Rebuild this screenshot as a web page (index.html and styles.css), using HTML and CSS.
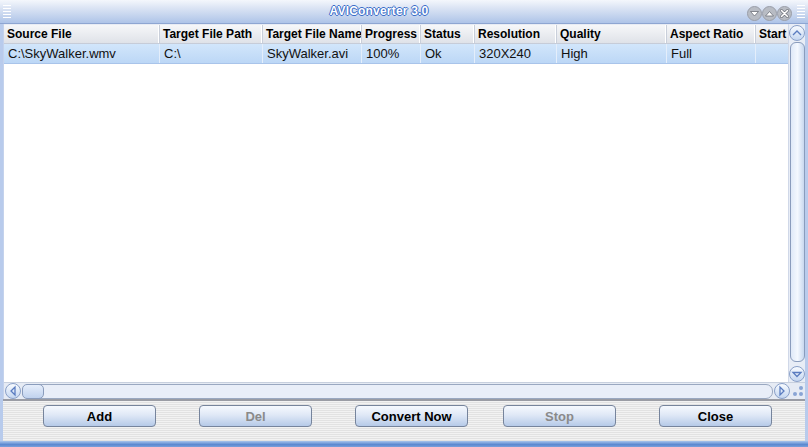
FILE: index.html
```html
<!DOCTYPE html>
<html>
<head>
<meta charset="utf-8">
<title>AVIConverter 3.0</title>
<link rel="stylesheet" href="styles.css">
</head>
<body>
<div class="win">
  <div class="titlebar">
    <div class="grip"><i></i><i></i><i></i><i></i><i></i></div>
    <div class="title">AVIConverter 3.0</div>
    <div class="tbtns">
      <span class="tb"><svg width="15" height="15" viewBox="0 0 15 15"><circle cx="7.5" cy="7.5" r="7" fill="#b8bcc4" stroke="#9a9ea8"/><path d="M3.5 5.5h8l-4 4.5z" fill="#fff" stroke="#6c7078" stroke-width="0.8"/></svg></span>
      <span class="tb"><svg width="15" height="15" viewBox="0 0 15 15"><circle cx="7.5" cy="7.5" r="7" fill="#b8bcc4" stroke="#9a9ea8"/><path d="M3.5 10h8l-4-4.5z" fill="#fff" stroke="#6c7078" stroke-width="0.8"/></svg></span>
      <span class="tb"><svg width="15" height="15" viewBox="0 0 15 15"><circle cx="7.5" cy="7.5" r="7" fill="#b8bcc4" stroke="#9a9ea8"/><path d="M4.5 4.5l6 6M10.5 4.5l-6 6" stroke="#6c7078" stroke-width="3" stroke-linecap="round"/><path d="M4.5 4.5l6 6M10.5 4.5l-6 6" stroke="#fff" stroke-width="1.6" stroke-linecap="round"/></svg></span>
    </div>
    <div class="grip grip-r"><i></i><i></i><i></i><i></i><i></i></div>
  </div>
  <div class="content">
    <div class="tablewrap">
      <div class="table">
        <div class="row head">
          <div class="c c1">Source File</div>
          <div class="c c2">Target File Path</div>
          <div class="c c3">Target File Name</div>
          <div class="c c4">Progress</div>
          <div class="c c5">Status</div>
          <div class="c c6">Resolution</div>
          <div class="c c7">Quality</div>
          <div class="c c8">Aspect Ratio</div>
          <div class="c c9">Start</div>
        </div>
        <div class="row sel">
          <div class="c c1">C:\SkyWalker.wmv</div>
          <div class="c c2">C:\</div>
          <div class="c c3">SkyWalker.avi</div>
          <div class="c c4">100%</div>
          <div class="c c5">Ok</div>
          <div class="c c6">320X240</div>
          <div class="c c7">High</div>
          <div class="c c8">Full</div>
          <div class="c c9"></div>
        </div>
      </div>
      <div class="vscroll">
        <span class="sbtn"><svg width="16" height="16" viewBox="0 0 16 16"><path d="M4 10l4-4 4 4" fill="none" stroke="#5a7cc0" stroke-width="1.3"/></svg></span>
        <span class="vthumb"></span>
        <span class="sbtn"><svg width="16" height="16" viewBox="0 0 16 16"><path d="M4 6.5h8l-4 4z" fill="none" stroke="#5a7cc0" stroke-width="1.3"/></svg></span>
      </div>
    </div>
    <div class="hscroll">
      <span class="sbtn"><svg width="16" height="16" viewBox="0 0 16 16"><path d="M10 4v8l-4-4z" fill="none" stroke="#5a7cc0" stroke-width="1.3"/></svg></span>
      <span class="htrack"><span class="hthumb"></span></span>
      <span class="sbtn"><svg width="16" height="16" viewBox="0 0 16 16"><path d="M6 4v8l4-4z" fill="none" stroke="#5a7cc0" stroke-width="1.3"/></svg></span>
      <span class="corner"><svg width="14" height="14" viewBox="0 0 14 14"><circle cx="10" cy="4" r="2" fill="#8aa4d4"/><circle cx="4" cy="10" r="2" fill="#8aa4d4"/><circle cx="10" cy="10" r="2" fill="#8aa4d4"/></svg></span>
    </div>
    <div class="buttons">
      <button class="btn">Add</button>
      <button class="btn dis">Del</button>
      <button class="btn">Convert Now</button>
      <button class="btn dis">Stop</button>
      <button class="btn">Close</button>
    </div>
  </div>
  <div class="bottomedge"></div>
</div>
</body>
</html>
```
FILE: styles.css
```css
* { box-sizing: border-box; }
html, body { margin: 0; padding: 0; }
body { width: 808px; height: 447px; overflow: hidden; background: #fff; font-family: "Liberation Sans", Arial, sans-serif; }
.win { width: 808px; height: 447px; display: flex; flex-direction: column; background: #c4d2ec; border-left: 3px solid #b8cbec; border-right: 3px solid #b8cbec; }
.titlebar { height: 24px; display: flex; align-items: center; background: linear-gradient(#f4f7fc 0%, #dbe4f4 35%, #aec4e8 100%); border-bottom: 1px solid #8ea6d2; margin-left: -3px; margin-right: -3px; padding-left: 3px; padding-right: 3px; }
.grip { width: 8px; display: flex; flex-direction: column; gap: 2px; }
.grip i { display: block; height: 1px; background: #8ea4cc; border-bottom: 1px solid #fff; }
.title { flex: 1; text-align: center; font-weight: bold; font-size: 12px; color: #fff; text-shadow: 1px 0 #3a6cc8, -1px 0 #3a6cc8, 0 1px #3a6cc8, 0 -1px #3a6cc8; letter-spacing: 0.2px; margin-top: -1px; }
.tbtns { display: flex; margin-right: 5px; margin-top: 3px; }
.tb { width: 15px; height: 15px; display: block; }
.tb svg { display: block; }
.content { flex: 1; display: flex; flex-direction: column; background: #fff; margin-left: 1px; }
.tablewrap { flex: 1; display: flex; min-height: 0; }
.table { flex: 1; overflow: hidden; background: #fff; }
.row { display: flex; height: 20px; }
.c { flex: none; white-space: nowrap; overflow: hidden; padding-left: 4px; display: flex; align-items: center; border-right: 1px solid #fff; }
.head { background: linear-gradient(#f6f7f9, #dfe2e8); border-bottom: 1px solid #c6ccd8; border-top: 1px solid #e8ecf4; }
.head .c { font-weight: bold; font-size: 12px; color: #000; padding-left: 3px; border-right: 1px solid #c9cfda; box-shadow: inset -1px 0 #fff; }
.sel { background: linear-gradient(#d2e6fb, #bcd7f6); border-bottom: 1px solid #a9c4ea; }
.sel .c { font-size: 13px; color: #111; border-right: 1px solid #e4eefb; }
.c1 { width: 156px; }
.c2 { width: 103px; }
.c3 { width: 99px; }
.c4 { width: 59px; }
.c5 { width: 54px; }
.c6 { width: 82px; }
.c7 { width: 110px; }
.c8 { width: 89px; }
.c9 { width: 40px; }
.vscroll { width: 17px; display: flex; flex-direction: column; align-items: center; background: #e8edf6; border-left: 1px solid #d0d8e8; padding-top: 1px; }
.sbtn { width: 16px; height: 16px; flex: none; border-radius: 50%; background: linear-gradient(#f8fbff, #c4d6f0); border: 1px solid #8aa0c8; display: flex; align-items: center; justify-content: center; }
.sbtn svg { display: block; margin: -1px; }
.vthumb { flex: 1; width: 15px; margin: 1px 0 4px; border-radius: 6px; border: 1px solid #8a9cbc; background: linear-gradient(90deg, #dfe9f8, #f4f8fe 50%, #c8d8ef); }
.hscroll { height: 17px; display: flex; align-items: center; background: #e6ebf4; border-top: 1px solid #c8d0de; padding-left: 1px; }
.htrack { flex: 1; height: 15px; margin: 0 1px; border: 1px solid #9aa8c0; border-radius: 7px; background: #e9eef8; display: flex; }
.hthumb { width: 22px; border-radius: 5px; border: 1px solid #8a9cbc; background: linear-gradient(#e6eefb, #c0d2ee); margin-left: -1px; margin-top: -1px; height: 15px; }
.corner { width: 15px; height: 15px; display: flex; align-items: center; justify-content: center; background: #e6ebf4; }
.buttons { height: 42px; display: flex; align-items: flex-start; padding-left: 40px; padding-top: 4px; background: repeating-linear-gradient(#f2f2f2 0 1px, #e2e2e2 1px 2px); border-top: 2px solid #9a9ca4; margin-left: -1px; }
.btn { flex: none; width: 113px; height: 22px; margin-right: 43px; border: 1px solid #76849c; border-radius: 4px; background: linear-gradient(#f6f9fe, #dfe8f6 45%, #b6cae8); font-family: "Liberation Sans", Arial, sans-serif; font-weight: bold; font-size: 13px; color: #000; padding: 0; }
.btn:nth-child(3) { margin-right: 35px; }
.btn:last-child { margin-right: 0; }
.btn.dis { color: #8a8a8a; }
.bottomedge { height: 6px; margin-left: -3px; margin-right: -3px; background: linear-gradient(#a8c4ec, #5a88d0 60%, #7aa0dc); }
```
